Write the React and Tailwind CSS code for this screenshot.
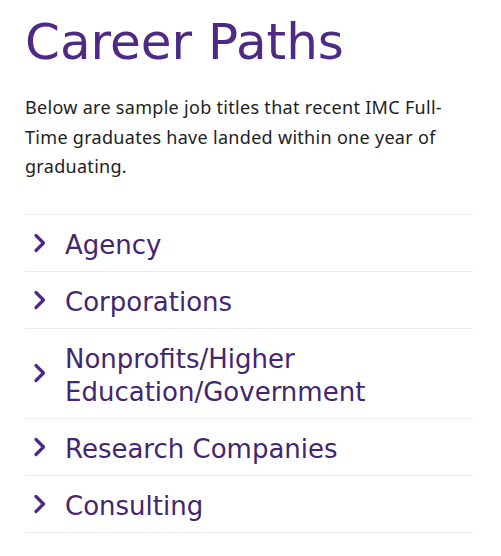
const paths = [
  "Agency",
  "Corporations",
  "Nonprofits/Higher Education/Government",
  "Research Companies",
  "Consulting",
];

const Chevron = () => (
  <svg width="14" height="22" viewBox="0 0 14 22" className="shrink-0">
    <polyline
      points="3,3.5 10.5,11 3,18.5"
      fill="none"
      stroke="#4e2a84"
      strokeWidth="3.2"
      strokeLinecap="round"
      strokeLinejoin="round"
    />
  </svg>
);

export default function App() {
  return (
    <div className="min-h-screen bg-white">
      <div className="px-[25px] pt-[14px] pr-[28px]">
        <h1
          className="text-[50px] leading-[56px] text-[#4e2a84]"
          style={{ fontFamily: "'DejaVu Sans', sans-serif" }}
        >
          Career Paths
        </h1>
        <p
          className="mt-[23px] text-[18px] leading-[29.5px] tracking-[0.3px] text-[#222]"
          style={{ fontFamily: "'Noto Sans', sans-serif" }}
        >
          Below are sample job titles that recent IMC Full-Time graduates have landed within one year of graduating.
        </p>
        <ul className="mt-[32px] border-t border-[#ececec]">
          {paths.map((p) => (
            <li key={p} className="flex items-center border-b border-[#ececec] pt-[11.5px] pb-[8.5px]">
              <div className="w-[40px] pl-[8px] -mt-[3px] flex items-center">
                <Chevron />
              </div>
              <span
                className="pt-[3px] text-[26px] leading-[33px] text-[#44256f] max-w-[330px]"
                style={{ fontFamily: "'DejaVu Sans', sans-serif" }}
              >
                {p}
              </span>
            </li>
          ))}
        </ul>
      </div>
    </div>
  );
}
